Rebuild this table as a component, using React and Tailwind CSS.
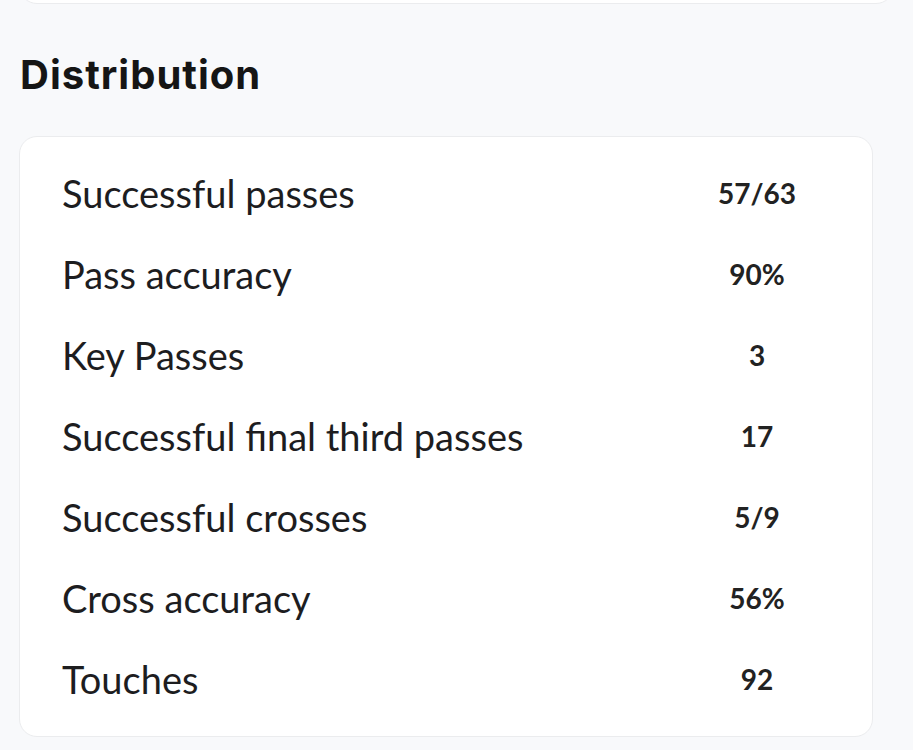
const ROWS = [
    {label: "Successful passes", value: "57/63"},
    {label: "Pass accuracy", value: "90%"},
    {label: "Key Passes", value: "3"},
    {label: "Successful final third passes", value: "17"},
    {label: "Successful crosses", value: "5/9"},
    {label: "Cross accuracy", value: "56%"},
    {label: "Touches", value: "92"},
];

const StatRow = ({label, value}) => (
    <div className="flex items-center h-[81px]">
        <span className="flex-1 text-[38px] text-[#1d1d1f] font-normal leading-none">{label}</span>
        <span className="w-[120px] text-center text-[28px] font-bold text-[#222] leading-none">{value}</span>
    </div>
);

export default function App() {
    return (
        <div className="min-h-[750px] bg-[#f8f9fb] overflow-hidden" style={{fontFamily: "Lato, 'Noto Sans', sans-serif"}}>
            {/* previous card, only its bottom edge shows */}
            <div className="mx-[19px] -mt-[40px] h-[44px] bg-white rounded-[18px] border border-[#ebecee]"/>

            <h2 className="px-5 pt-[51px] pb-[41px] text-[40px] leading-none font-bold text-[#151515] tracking-[1px]"
                style={{fontFamily: "Inter, 'Liberation Sans', sans-serif"}}>
                Distribution
            </h2>

            <div className="mx-[19px] w-[854px] bg-white rounded-[18px] border border-[#ebecee] pt-[15px] pb-[17px] pl-[42px] pr-[55px]">
                {ROWS.map((row) => (
                    <StatRow key={row.label} label={row.label} value={row.value}/>
                ))}
            </div>
        </div>
    );
}
